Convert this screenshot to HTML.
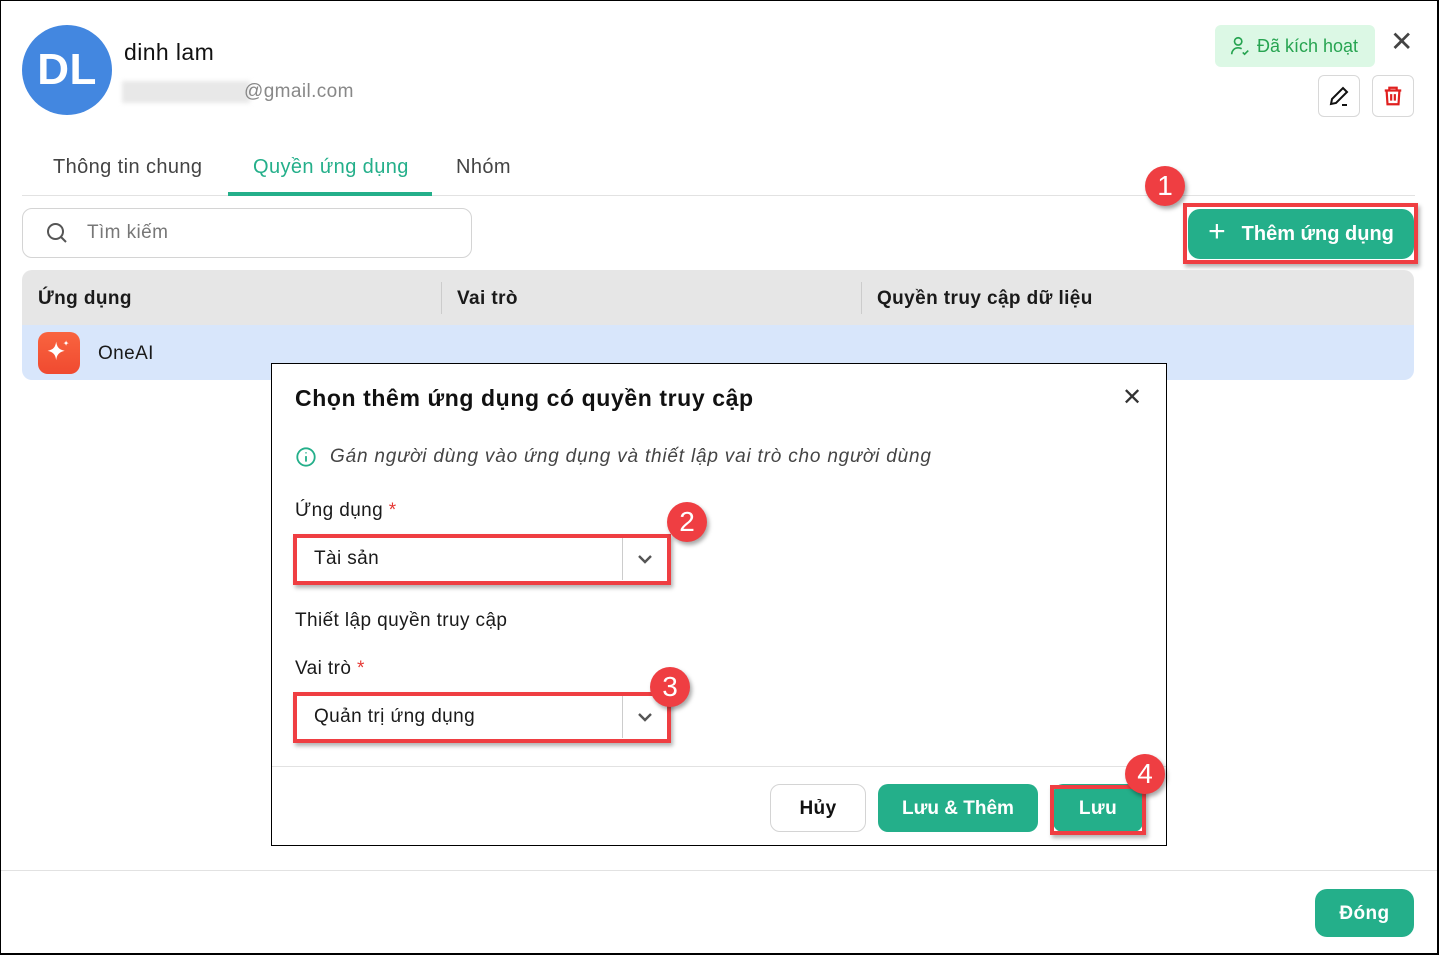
<!DOCTYPE html>
<html><head><meta charset="utf-8"><style>
*{box-sizing:border-box;margin:0;padding:0}
body{width:1439px;height:955px;font-family:"Liberation Sans",sans-serif;background:#fff;position:relative;overflow:hidden;color:#1a1a1a;letter-spacing:0.4px}
.frame{position:absolute;left:0;top:0;width:1439px;height:955px;border:1px solid #000;border-right-width:2px;border-bottom-width:2px}
.abs{position:absolute}
.badge{position:absolute;width:40px;height:40px;border-radius:50%;background:#ef3e42;color:#fff;font-size:28px;display:flex;align-items:center;justify-content:center;box-shadow:2px 3px 4px rgba(0,0,0,.35);letter-spacing:0}
.redbox{position:absolute;border:4px solid #ef3e42;box-shadow:2px 3px 4px rgba(0,0,0,.3)}
.green{background:#24af8a;color:#fff;font-weight:bold;border-radius:10px;display:flex;align-items:center;justify-content:center}
.sel{position:absolute;left:298px;width:368px;height:42px;background:#fff;font-size:19px;display:flex;align-items:center;padding-left:16px}
.sel .dd{position:absolute;right:0;top:0;width:44px;height:100%;border-left:1px solid #ccc;display:flex;align-items:center;justify-content:center}
</style></head><body>
<div class="frame"></div>
<div class="abs" style="left:22px;top:25px;width:90px;height:90px;border-radius:50%;background:#4387e0;color:#fff;font-weight:bold;font-size:44px;display:flex;align-items:center;justify-content:center">DL</div>
<div class="abs" style="left:124px;top:39px;font-size:23px;color:#111;font-weight:500">dinh lam</div>
<div class="abs" style="left:122px;top:81px;width:128px;height:22px;background:#e8e8e8;filter:blur(2px)"></div>
<div class="abs" style="left:244px;top:81px;font-size:19px;color:#888">@gmail.com</div>
<div class="abs" style="left:1215px;top:25px;width:160px;height:42px;background:#dcf8e5;border-radius:6px;color:#27a451;font-size:18px;display:flex;align-items:center;padding-left:14px;letter-spacing:0">
<svg width="22" height="22" viewBox="0 0 24 24" fill="none" stroke="#27a451" stroke-width="1.8"><circle cx="10" cy="7" r="4"/><path d="M3 21c0-4 3-7 7-7 1.5 0 2.8.4 3.8 1"/><path d="M15 19l2 2 4-4"/></svg><span style="margin-left:6px">Đã kích hoạt</span></div>
<div class="abs" style="left:1390px;top:25px;font-size:28px;color:#444">✕</div>
<div class="abs" style="left:1318px;top:75px;width:42px;height:42px;border:1px solid #d8d8d8;border-radius:6px;display:flex;align-items:center;justify-content:center"><svg width="24" height="24" viewBox="0 0 24 24" fill="none" stroke="#111" stroke-width="2"><path d="M4 20l1-5L16 4l4 4L9 19z"/><path d="M15 21h5"/></svg></div>
<div class="abs" style="left:1372px;top:75px;width:42px;height:42px;border:1px solid #d8d8d8;border-radius:6px;display:flex;align-items:center;justify-content:center"><svg width="22" height="22" viewBox="0 0 24 24" fill="none" stroke="#e0201f" stroke-width="2.4"><path d="M3 6h18M8 6V3h8v3M5 6l1 15h12l1-15M10 10v7M14 10v7"/></svg></div>
<div class="abs" style="left:53px;top:156px;font-size:20px;color:#444">Thông tin chung</div>
<div class="abs" style="left:253px;top:156px;font-size:20px;color:#24af8a">Quyền ứng dụng</div>
<div class="abs" style="left:456px;top:156px;font-size:20px;color:#444">Nhóm</div>
<div class="abs" style="left:22px;top:195px;width:1393px;height:1px;background:#e2e2e2"></div>
<div class="abs" style="left:228px;top:192px;width:204px;height:4px;background:#24af8a"></div>
<div class="abs" style="left:22px;top:208px;width:450px;height:50px;border:1px solid #d4d4d4;border-radius:10px;display:flex;align-items:center;padding-left:22px;font-size:19px;color:#777">
<svg width="24" height="24" viewBox="0 0 24 24" fill="none" stroke="#555" stroke-width="2"><circle cx="10.5" cy="10.5" r="7.5"/><path d="M16 16l5 5"/></svg><span style="margin-left:18px">Tìm kiếm</span></div>
<div class="abs green" style="left:1188px;top:209px;width:226px;height:50px;font-size:20px;border-radius:12px;letter-spacing:0"><span style="font-size:30px;font-weight:normal;margin-right:16px;margin-top:-4px">+</span>Thêm ứng dụng</div>
<div class="redbox" style="left:1183px;top:203px;width:235px;height:61px"></div>
<div class="badge" style="left:1145px;top:166px">1</div>
<div class="abs" style="left:22px;top:270px;width:1392px;height:110px;border-radius:10px;overflow:hidden">
<div style="height:55px;background:#e6e6e6;position:relative;font-weight:bold;font-size:19px">
<span class="abs" style="left:16px;top:18px">Ứng dụng</span>
<span class="abs" style="left:419px;top:12px;width:1px;height:32px;background:#ccc"></span>
<span class="abs" style="left:435px;top:18px">Vai trò</span>
<span class="abs" style="left:839px;top:12px;width:1px;height:32px;background:#ccc"></span>
<span class="abs" style="left:855px;top:18px">Quyền truy cập dữ liệu</span></div>
<div style="height:55px;background:#d8e6fb;position:relative">
<div class="abs" style="left:16px;top:7px;width:42px;height:42px;border-radius:10px;background:linear-gradient(#f9643f,#f04a30);display:flex;align-items:center;justify-content:center"><svg width="34" height="34" viewBox="0 0 24 24" fill="#fff"><path d="M10 4c.6 4 2 5.6 6 6.5-4 .9-5.4 2.5-6 6.5-.6-4-2-5.6-6-6.5 4-.9 5.4-2.5 6-6.5z"/><path d="M17 3c.2 1.3.7 1.8 2 2-1.3.2-1.8.7-2 2-.2-1.3-.7-1.8-2-2 1.3-.2 1.8-.7 2-2z"/></svg></div>
<span class="abs" style="left:76px;top:18px;font-size:19px">OneAI</span></div></div>
<div class="abs" style="left:271px;top:363px;width:896px;height:483px;background:#fff;border:1px solid #000"></div>
<div class="abs" style="left:295px;top:385px;font-size:23px;font-weight:bold;color:#111;letter-spacing:0.6px">Chọn thêm ứng dụng có quyền truy cập</div>
<div class="abs" style="left:1122px;top:383px;font-size:24px;color:#333">✕</div>
<svg class="abs" style="left:295px;top:446px" width="22" height="22" viewBox="0 0 24 24" fill="none" stroke="#24af8a" stroke-width="2"><circle cx="12" cy="12" r="9.5"/><path d="M12 11v6M12 7v1"/></svg>
<div class="abs" style="left:330px;top:446px;font-size:19px;font-style:italic;color:#444;letter-spacing:0.8px">Gán người dùng vào ứng dụng và thiết lập vai trò cho người dùng</div>
<div class="abs" style="left:295px;top:500px;font-size:19px">Ứng dụng <span style="color:#e53935">*</span></div>
<div class="sel" style="top:538px">Tài sản<div class="dd"><svg width="18" height="12" viewBox="0 0 18 12" fill="none" stroke="#555" stroke-width="2.4"><path d="M3 3l6 6 6-6"/></svg></div></div>
<div class="redbox" style="left:293px;top:534px;width:378px;height:51px"></div>
<div class="badge" style="left:667px;top:502px">2</div>
<div class="abs" style="left:295px;top:610px;font-size:19px">Thiết lập quyền truy cập</div>
<div class="abs" style="left:295px;top:658px;font-size:19px">Vai trò <span style="color:#e53935">*</span></div>
<div class="sel" style="top:696px">Quản trị ứng dụng<div class="dd"><svg width="18" height="12" viewBox="0 0 18 12" fill="none" stroke="#555" stroke-width="2.4"><path d="M3 3l6 6 6-6"/></svg></div></div>
<div class="redbox" style="left:293px;top:692px;width:378px;height:51px"></div>
<div class="badge" style="left:650px;top:667px">3</div>
<div class="abs" style="left:272px;top:766px;width:894px;height:1px;background:#e2e2e2"></div>
<div class="abs" style="left:770px;top:784px;width:96px;height:48px;border:1px solid #d4d4d4;border-radius:10px;display:flex;align-items:center;justify-content:center;font-weight:bold;font-size:19px;color:#111;padding-top:2px">Hủy</div>
<div class="abs green" style="left:878px;top:784px;width:160px;height:48px;font-size:19px;padding-top:2px;letter-spacing:0">Lưu &amp; Thêm</div>
<div class="abs green" style="left:1053px;top:784px;width:90px;height:48px;font-size:19px;padding-top:2px">Lưu</div>
<div class="redbox" style="left:1050px;top:785px;width:96px;height:50px"></div>
<div class="badge" style="left:1125px;top:754px">4</div>
<div class="abs" style="left:1px;top:870px;width:1436px;height:1px;background:#e2e2e2"></div>
<div class="abs green" style="left:1315px;top:889px;width:99px;height:48px;font-size:19px;border-radius:12px;padding-top:2px">Đóng</div>
</body></html>
